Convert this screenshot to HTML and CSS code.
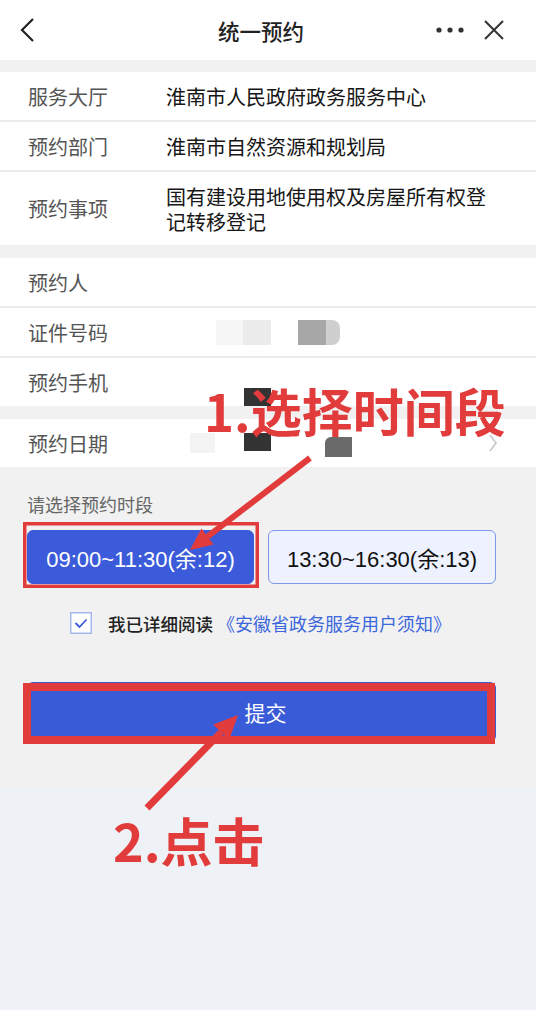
FILE: index.html
```html
<!DOCTYPE html>
<html lang="zh-CN">
<head>
<meta charset="utf-8">
<title>统一预约</title>
<link rel="stylesheet" href="styles.css">
</head>
<body>
<div class="page">
  <header class="topbar">
    <svg class="back" width="18" height="26" viewBox="0 0 18 26"><path d="M15 2 L4 13 L15 24" fill="none" stroke="#222" stroke-width="2.2"/></svg>
    <div class="title">统一预约</div>
    <div class="actions">
      <svg width="30" height="8" viewBox="0 0 30 8"><circle cx="4" cy="4" r="2.6" fill="#333"/><circle cx="15" cy="4" r="2.6" fill="#333"/><circle cx="26" cy="4" r="2.6" fill="#333"/></svg>
      <svg width="22" height="22" viewBox="0 0 22 22"><path d="M2 2 L20 20 M20 2 L2 20" stroke="#333" stroke-width="2" fill="none"/></svg>
    </div>
  </header>

  <section class="group">
    <div class="row"><div class="label">服务大厅</div><div class="value">淮南市人民政府政务服务中心</div></div>
    <div class="row"><div class="label">预约部门</div><div class="value">淮南市自然资源和规划局</div></div>
    <div class="row tall"><div class="label">预约事项</div><div class="value">国有建设用地使用权及房屋所有权登记转移登记</div></div>
  </section>

  <section class="group">
    <div class="row"><div class="label">预约人</div><div class="value"></div></div>
    <div class="row"><div class="label">证件号码</div>
      <div class="value masks">
        <span class="m m1"></span><span class="m m2"></span><span class="m m3"></span><span class="m m4"></span>
      </div>
    </div>
    <div class="row bottomed"><div class="label">预约手机</div>
      <div class="value masks"><span class="m m5"></span></div>
    </div>
  </section>

  <section class="group">
    <div class="row last"><div class="label">预约日期</div>
      <div class="value masks">
        <span class="m m6"></span><span class="m m7"></span><span class="m m8"></span>
      </div>
      <svg class="chev" width="10" height="20" viewBox="0 0 10 20"><path d="M2 2 L8 10 L2 18" fill="none" stroke="#c8c8c8" stroke-width="1.6"/></svg>
    </div>
  </section>

  <section class="slots">
    <div class="slots-label">请选择预约时段</div>
    <div class="slot-list">
      <div class="slot active">09:00~11:30(余:12)</div>
      <div class="slot">13:30~16:30(余:13)</div>
    </div>
    <div class="agree">
      <svg class="check" width="22" height="22" viewBox="0 0 22 22"><rect x="0.75" y="0.75" width="20.5" height="20.5" fill="#fff" stroke="#a9b8ea" stroke-width="1.5"/><path d="M5.5 11 L9.5 15 L16.5 7.5" fill="none" stroke="#3b5bdb" stroke-width="1.8"/></svg>
      <span class="agree-text">我已详细阅读</span>
      <span class="agree-link">《安徽省政务服务用户须知》</span>
    </div>
    <div class="submit">提交</div>
  </section>

  <div class="footer"></div>

  <svg class="notes" width="536" height="1010" viewBox="0 0 536 1010">
    <rect x="24.75" y="523.75" width="232.5" height="62.5" fill="none" stroke="#e23b3b" stroke-width="3.5"/>
    <rect x="27" y="687" width="464" height="53" fill="none" stroke="#e23b3b" stroke-width="8"/>
    <line x1="310" y1="458" x2="207.5" y2="536.6" stroke="#e23b3b" stroke-width="6"/>
    <polygon points="190,550 213.6,544.5 201.4,528.6" fill="#e23b3b"/>
    <line x1="147" y1="808" x2="221.2" y2="732.2" stroke="#e23b3b" stroke-width="7"/>
    <polygon points="238,715 229.1,739.9 213.3,724.5" fill="#e23b3b"/>
    <text x="204" y="432" class="note-text n1">1.选择时间段</text>
    <text x="113" y="862" class="note-text n2">2.点击</text>
  </svg>
</div>
</body>
</html>
```

FILE: styles.css
```css
* { box-sizing: border-box; }
html, body { margin: 0; padding: 0; }
body {
  font-family: "Noto Sans CJK SC", "Noto Sans", sans-serif;
  background: #f1f1f1;
  width: 536px;
  height: 1010px;
  overflow: hidden;
}
.page {
  position: relative;
  width: 536px;
  height: 1010px;
  display: flex;
  flex-direction: column;
}
.topbar {
  height: 60px;
  background: #fff;
  display: flex;
  align-items: center;
  justify-content: space-between;
  padding: 0 31px 0 18px;
  position: relative;
  flex-shrink: 0;
}
.title {
  position: absolute;
  left: 0;
  right: 14px;
  text-align: center;
  font-size: 21.5px;
  font-weight: 500;
  color: #222;
  pointer-events: none;
}
.actions {
  display: flex;
  align-items: center;
  gap: 18px;
}
.group {
  background: #fff;
  margin-top: 12px;
  flex-shrink: 0;
}
.group + .group { margin-top: 13px; }
.row {
  display: flex;
  align-items: center;
  min-height: 50px;
  padding: 0 40px 0 28px;
  border-bottom: 2px solid #ececec;
  font-size: 20px;
  position: relative;
}
.row:last-child { border-bottom: none; min-height: 48px; }
.row.tall { min-height: 73px; padding-top: 10px; padding-bottom: 10px; }
.label {
  width: 138px;
  flex-shrink: 0;
  color: #555;
}
.value {
  color: #161616;
  line-height: 25px;
  flex: 1;
}
.masks {
  display: flex;
  align-items: center;
  height: 25px;
}
.m { display: block; height: 25px; }
.m1 { margin-left: 50px; width: 27px; background: #f6f6f6; }
.m2 { width: 28px; background: #ebebeb; }
.m3 { margin-left: 27px; width: 28px; background: #a7a7a7; }
.m4 { width: 14px; background: #cfcfcf; border-radius: 0 8px 8px 0; }
.bottomed .masks { align-self: flex-end; height: 18px; align-items: flex-end; }
.m5 { margin-left: 78px; width: 27px; height: 18px; background: #333; }
.last .masks { height: 48px; align-items: flex-start; }
.m6 { margin-left: 24px; margin-top: 14px; width: 25px; height: 20px; background: #f3f3f3; }
.m7 { margin-left: 29px; margin-top: 14px; width: 27px; height: 18px; background: #333; }
.m8 { margin-left: 54px; margin-top: 18px; width: 27px; height: 20px; background: #6a6a6a; border-radius: 6px 0 0 0; }
.chev { position: absolute; right: 38px; top: 14px; }
.slots {
  padding: 25px 27px 0 27px;
  flex-shrink: 0;
}
.slots-label {
  font-size: 18px;
  line-height: 24px;
  color: #666;
}
.slot-list {
  display: flex;
  gap: 14px;
  margin-top: 14px;
}
.slot {
  width: 228px;
  height: 54px;
  border-radius: 6px;
  display: flex;
  align-items: center;
  justify-content: center;
  font-family: "Liberation Sans", "Noto Sans CJK SC", sans-serif;
  font-size: 22px;
  color: #111;
  background: #eef2fe;
  border: 1.5px solid #7d98e6;
}
.slot.active {
  background: #3b5bdb;
  border-color: #3b5bdb;
  color: #fff;
  width: 227px;
}
.agree {
  display: flex;
  align-items: center;
  margin-top: 27px;
  padding-left: 43px;
  height: 24px;
}
.check { flex-shrink: 0; }
.agree-text {
  margin-left: 16px;
  font-size: 17.5px;
  color: #222;
  font-weight: 500;
}
.agree-link {
  margin-left: 4px;
  font-size: 18px;
  color: #3d68dc;
}
.submit {
  margin-top: 47px;
  height: 60px;
  width: 469px;
  border-radius: 6px;
  background: #3a5bd8;
  color: #fff;
  font-size: 21px;
  display: flex;
  align-items: center;
  justify-content: center;
  padding-left: 8px;
}
.footer {
  margin-top: 45px;
  flex: 1;
  background: #eef2f6;
}
.notes {
  position: absolute;
  left: 0;
  top: 0;
  pointer-events: none;
}
.note-text {
  font-family: "Noto Sans CJK SC", sans-serif;
  font-weight: 700;
  fill: #e23b3b;
}
.n1 { font-size: 51px; }
.n2 { font-size: 52px; }
```
